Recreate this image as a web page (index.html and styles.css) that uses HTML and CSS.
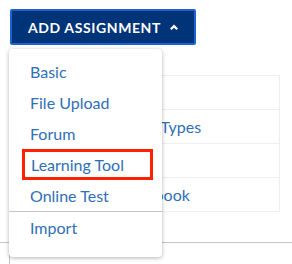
FILE: index.html
```html
<!DOCTYPE html>
<html lang="en">
<head>
<meta charset="UTF-8" />
<title>Add Assignment</title>
<link rel="stylesheet" href="styles.css">
</head>
<body>
<div class="page">
  <button class="add-btn">ADD ASSIGNMENT <span class="caret">
    <svg width="10" height="7" viewBox="0 0 10 7"><path d="M1.8 5.3 L5 2.1 L8.2 5.3" fill="none" stroke="#fff" stroke-width="2.2"/></svg>
  </span></button>

  <table class="types">
    <tr><td></td></tr>
    <tr><td class="long">Assignment Types</td></tr>
    <tr><td></td></tr>
    <tr><td class="short">Gradebook</td></tr>
  </table>
  <div class="rule"></div>
  <div class="below"></div>

  <ul class="menu">
    <li>Basic</li>
    <li>File Upload</li>
    <li>Forum</li>
    <li class="marked">Learning Tool</li>
    <li>Online Test</li>
    <li class="sep">Import</li>
  </ul>
</div>
</body>
</html>
```
FILE: styles.css
```css
body {
  margin: 0;
  background: #fff;
  font-family: Lato, "Liberation Sans", sans-serif;
}

.page {
  position: relative;
  width: 292px;
  height: 264px;
  overflow: hidden;
  padding: 9px 0 0 10px;
  box-sizing: border-box;
}

/* Button */
.add-btn {
  display: flex;
  align-items: center;
  width: 186px;
  height: 36px;
  padding: 0 0 0 16px;
  background: #003478;
  border: 2px solid #1c62d4;
  border-radius: 2px;
  color: #fff;
  font-family: Lato, "Liberation Sans", sans-serif;
  font-weight: 700;
  font-size: 14px;
  letter-spacing: 0.6px;
}
.caret {
  display: flex;
  margin-left: 8px;
}

/* Background table */
.types {
  margin: 30px 0 0 40px;
  width: 230px;
  border-collapse: collapse;
  font-size: 16px;
  color: #2f6fb5;
}
.types td {
  height: 33px;
  border: 1px solid #efefef;
  padding: 0;
  white-space: nowrap;
}
.types td.long {
  padding-left: 24px;
}
.types td.short {
  padding-left: 61px;
}
.rule {
  margin-top: 30px;
  margin-left: -10px;
  height: 1px;
  background: #c4c4c4;
}
.below {
  margin-left: -1px;
  height: 30px;
  border-left: 1px solid #c4c4c4;
}

/* Dropdown */
.menu {
  position: absolute;
  left: 9px;
  top: 49px;
  width: 153px;
  margin: 0;
  padding: 7px 0 14px;
  list-style: none;
  background: #fff;
  border-radius: 4px;
  box-shadow: 0 1px 4px rgba(0,0,0,0.3);
}
.menu li {
  height: 31px;
  line-height: 31px;
  padding-left: 21px;
  font-size: 16px;
  color: #2f6fb5;
  white-space: nowrap;
}
.menu li.marked {
  margin: 0 9px 0 13px;
  padding-left: 6px;
  height: 25px;
  line-height: 25px;
  border: 3px solid #ff2200;
}
.menu li.sep {
  border-top: 1px solid #c4c4c4;
}
```
